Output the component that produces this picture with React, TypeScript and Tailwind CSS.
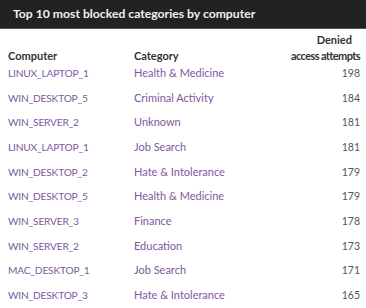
import React from 'react';

type Row = { computer: string; category: string; attempts: number };

const rows: Row[] = [
  { computer: 'LINUX_LAPTOP_1', category: 'Health & Medicine', attempts: 198 },
  { computer: 'WIN_DESKTOP_5', category: 'Criminal Activity', attempts: 184 },
  { computer: 'WIN_SERVER_2', category: 'Unknown', attempts: 181 },
  { computer: 'LINUX_LAPTOP_1', category: 'Job Search', attempts: 181 },
  { computer: 'WIN_DESKTOP_2', category: 'Hate & Intolerance', attempts: 179 },
  { computer: 'WIN_DESKTOP_5', category: 'Health & Medicine', attempts: 179 },
  { computer: 'WIN_SERVER_3', category: 'Finance', attempts: 178 },
  { computer: 'WIN_SERVER_2', category: 'Education', attempts: 173 },
  { computer: 'MAC_DESKTOP_1', category: 'Job Search', attempts: 171 },
  { computer: 'WIN_DESKTOP_3', category: 'Hate & Intolerance', attempts: 165 },
];

export default function App() {
  return (
    <div className="w-[366px] h-[308px] bg-white overflow-hidden font-['Lato','Liberation_Sans',sans-serif]">
      {/* Title bar */}
      <div className="h-[29px] bg-[#222222] border-b border-[#555] flex items-center pl-[13px]">
        <h2 className="text-[12.2px] font-bold text-[#f0f0f0] leading-none">
          Top 10 most blocked categories by computer
        </h2>
      </div>

      {/* Table */}
      <div className="pl-[8px] pr-[6px] pt-[3px]">
        <div className="flex items-end text-[11px] font-bold text-[#333] leading-[16px]">
          <div className="w-[126px]">Computer</div>
          <div className="flex-1">Category</div>
          <div className="flex flex-col items-end">
            <span className="pr-[8px]">Denied</span>
            <span className="tracking-[-0.6px]">access attempts</span>
          </div>
        </div>

        {rows.map((r, i) => (
          <div key={i} className="flex h-[24.67px] leading-[18px] text-[11px]">
            <div className="w-[126px] text-[10.2px] tracking-[-0.2px] text-[#7d5a9e]">{r.computer}</div>
            <div className="flex-1 text-[#7d5a9e]">{r.category}</div>
            <div className="text-[10.5px] text-[#555] text-right">{r.attempts}</div>
          </div>
        ))}
      </div>
    </div>
  );
}
